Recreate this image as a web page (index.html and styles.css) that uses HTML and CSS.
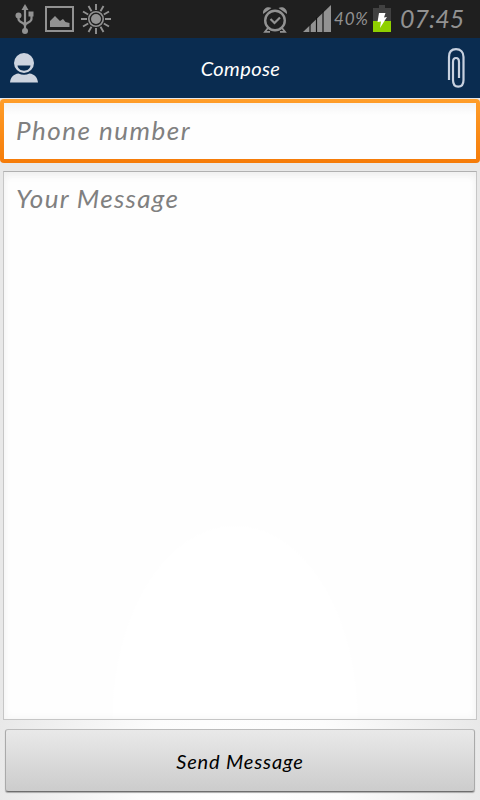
FILE: index.html
```html
<!DOCTYPE html>
<html lang="en">
<head>
    <meta charset="UTF-8">
    <meta name="viewport" content="width=device-width, initial-scale=1.0">
    <title>Compose</title>
    <link rel="stylesheet" href="styles.css">
</head>
<body>
    <div class="status-bar">
        <div class="status-left">
            <svg class="usb" width="20" height="30" viewBox="0 0 20 30" fill="none" stroke="#929292" stroke-width="2.2">
                <path d="M10 3v24M3.500 11v4c0 3.500 6.500 3.500 6.500 7M16.500 10v5c0 3.500-6.500 3.500-6.500 7"/>
                <path d="M10 0l3.500 6h-7z" fill="#929292" stroke="none"/>
                <circle cx="3.500" cy="11.500" r="3" fill="#929292" stroke="none"/>
                <path d="M13.500 7.500h5v5h-5z" fill="#929292" stroke="none"/>
                <circle cx="10" cy="27" r="3" fill="#929292" stroke="none"/>
            </svg>
            <svg class="picture" width="29" height="26" viewBox="0 0 29 26">
                <path d="M1 1h27v24H1z" fill="none" stroke="#929292" stroke-width="2"/>
                <path d="M5 21v-6l5-5 5 5 3-2 2.500 3 4 1v4z" fill="#929292"/>
            </svg>
            <svg class="sun" width="30" height="30" viewBox="0 0 30 30" fill="none" stroke="#929292">
                <circle cx="15" cy="15" r="5" fill="#929292" stroke="none"/>
                <circle cx="15" cy="15" r="7.200" stroke-width="1.600"/>
                <path stroke-width="1.900" d="M15 0v6M15 24v6M0 15h6M24 15h6M7.500 2l3 5.200M19.500 22.800l3 5.200M22.500 2l-3 5.200M10.500 22.800l-3 5.200M2 7.500l5.200 3M22.800 19.500l5.200 3M2 22.500l5.200-3M22.800 10.500l5.200-3"/>
            </svg>
        </div>
        <div class="status-right">
            <svg class="alarm" width="24" height="26" viewBox="0 0 24 26" fill="none" stroke="#929292">
                <circle cx="12" cy="13.500" r="9.800" stroke-width="2.400"/>
                <path d="M7.500 12l4 4 5.500-5.500" stroke-width="2.200"/>
                <path d="M0 7C-.5 2 4 -1 8.500 1zM24 7C24.500 2 20-1 15.500 1z" fill="#929292" stroke="none"/>
                <path d="M5 21l-3 3.800h5M19 21l3 3.800h-5" stroke-width="1.800"/>
            </svg>
            <svg class="signal" width="28" height="27" viewBox="0 0 28 27">
                <path d="M0 27L28 0v27z" fill="#929292"/>
                <path d="M7 19v8M13.500 12v15M20 6v21" stroke="#141414" stroke-width="1.200"/>
            </svg>
            <span class="percent">40%</span>
            <svg class="battery" width="18" height="27" viewBox="0 0 18 27">
                <path d="M6 0h6v3h6v13H0V3h6z" fill="#414141"/>
                <path d="M0 16h18v11H0z" fill="#8fd000"/>
                <path d="M6 8h6.500l-1.500 4.500 3-.5-7 11 1-6.500-3.500.500z" fill="#fff"/>
            </svg>
            <span class="time">07:45</span>
        </div>
    </div>

    <div class="header">
        <svg class="contact" width="28" height="30" viewBox="0 0 28 30">
            <circle cx="14" cy="10" r="10" fill="#cdd4df"/>
            <path d="M7.500 12.500h13c-.5 3.200-3 5.200-6.500 5.200s-6-2-6.500-5.200z" fill="#0a2c50"/>
            <path d="M0 29.500c.5-5 3.500-8.500 8.500-9 3.500 1.600 7.500 1.600 11 0 5 .5 8 4 8.500 9z" fill="#cdd4df"/>
        </svg>
        <h1>Compose</h1>
        <svg class="attach" width="18" height="40" viewBox="0 0 18 40" fill="none" stroke="#c8d1df" stroke-width="2.200">
            <path d="M2 32V9C2 4 4.500 1.200 9 1.200S16.500 4 16.500 9v23c0 4-2 6.700-5.300 6.700S6 36 6 32V14c0-2.500 1.200-4 3-4s3 1.500 3 4v16"/>
        </svg>
    </div>

    <div class="compose">
        <input class="phone" type="text" placeholder="Phone number">
        <textarea class="message" placeholder="Your Message"></textarea>
        <button class="send">Send Message</button>
    </div>
</body>
</html>
```
FILE: styles.css
```css
* {
    box-sizing: border-box;
}

body {
    font-family: Lato, sans-serif;
    font-style: italic;
    margin: 0;
    height: 800px;
    display: flex;
    flex-direction: column;
    overflow: hidden;
    background: radial-gradient(ellipse 250px 350px at 50% 100%, #fff 0%, #fcfcfc 40%, #e8e8e8 100%);
}

svg {
    display: block;
    flex: none;
}

.status-bar {
    height: 38px;
    flex: none;
    display: flex;
    justify-content: space-between;
    background-color: #1f1f1f;
    color: #929292;
}

.status-left,
.status-right {
    display: flex;
    align-items: flex-start;
}

.usb {
    margin: 4px 0 0 15px;
}

.picture {
    margin: 6px 0 0 10px;
}

.sun {
    margin: 4px 0 0 7px;
}

.alarm {
    margin: 7px 16px 0 0;
}

.signal {
    margin: 5px 3px 0 0;
}

.percent {
    width: 39px;
    font-size: 17px;
    line-height: 38px;
    letter-spacing: 0.8px;
    white-space: nowrap;
}

.battery {
    margin-top: 5px;
}

.time {
    width: 89px;
    padding-left: 9px;
    font-size: 25px;
    line-height: 37px;
    white-space: nowrap;
}

.header {
    height: 60px;
    flex: none;
    display: flex;
    align-items: center;
    justify-content: space-between;
    padding: 0 15px 0 10px;
    background-color: #0a2c50;
}

.header h1 {
    margin: 0 0 0 -4px;
    font-size: 20px;
    font-weight: normal;
    line-height: 60px;
    letter-spacing: 0.4px;
    color: #fff;
}

.compose {
    flex: 1;
    display: flex;
    flex-direction: column;
    padding-top: 1px;
}

.phone,
.message {
    display: block;
    font: inherit;
    font-size: 26px;
    letter-spacing: 1.5px;
    color: #222;
    outline: none;
    resize: none;
}

.phone::placeholder,
.message::placeholder {
    color: #808080;
    opacity: 1;
}

.phone {
    width: 100%;
    height: 64px;
    padding: 0 12px 2px;
    border: 4px solid transparent;
    border-radius: 4px;
    background: linear-gradient(#f4f4f4, #fefefe 12px) padding-box, linear-gradient(#ff9e2a, #f57b08) border-box;
}

.message {
    height: 549px;
    margin: 8px 3px 0;
    padding: 10px 12px;
    border: 1px solid #c6c6c6;
    border-top-color: #b0b0b0;
    letter-spacing: 1.3px;
    background: radial-gradient(ellipse 123px 194px at 231px 100%, #fff 99%, #fefefe 100%);
    box-shadow: inset 0 6px 8px -3px #eee, inset 0 0 8px #f4f4f4;
}

.send {
    height: 63px;
    margin: 9px 5px 0;
    border: 1px solid #aaa;
    border-top-color: #bcbcbc;
    border-bottom: 1px solid #6e6e6e;
    border-radius: 3px;
    background: linear-gradient(#e9e9e9, #cccccc);
    box-shadow: 0 1px 1px #aaa;
    font: inherit;
    font-size: 20px;
    letter-spacing: 0.85px;
    color: #000;
}
```
